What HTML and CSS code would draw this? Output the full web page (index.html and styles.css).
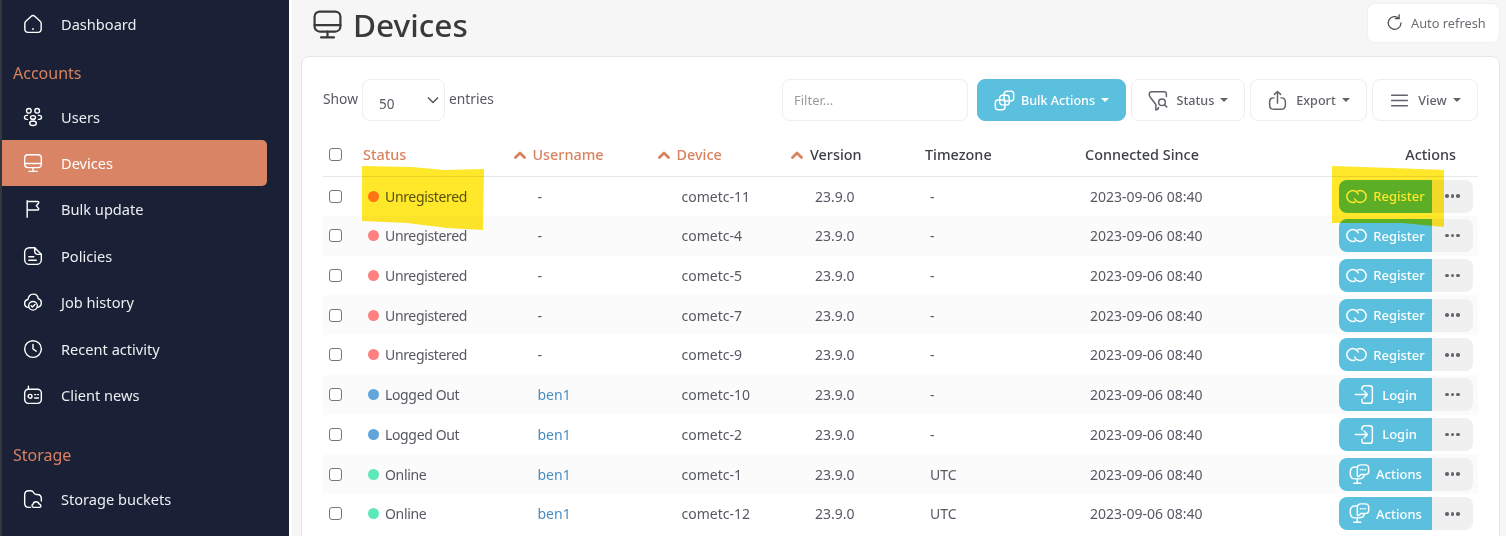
FILE: index.html
```html
<!DOCTYPE html>
<html>
<head>
    <title>Devices</title>
    <link rel="stylesheet" href="styles.css">
</head>
<body>
    <svg class="icon-defs" width="0" height="0">
        <symbol id="i-home" viewBox="0 0 24 24"><path d="M3.400 8.600 9.600 3a3.600 3.600 0 0 1 4.800 0l6.200 5.600a3.400 3.400 0 0 1 1.200 2.600V18a4 4 0 0 1-4 4H6.200a4 4 0 0 1-4-4v-6.800a3.400 3.400 0 0 1 1.200-2.600z"/><path d="M12 17.500v1"/></symbol>
        <symbol id="i-users" viewBox="0 0 24 24"><circle cx="7" cy="4.500" r="2.800"/><circle cx="17" cy="4.500" r="2.800"/><ellipse cx="12" cy="12.500" rx="3" ry="2.200"/><path d="M5.500 10H4.200a2.300 2.300 0 0 0 0 4.800h1.300M18.500 10h1.300a2.300 2.300 0 0 1 0 4.800h-1.300"/><ellipse cx="12" cy="19.500" rx="4" ry="2.700"/></symbol>
        <symbol id="i-monitor" viewBox="0 0 24 24"><rect x="2" y="2" width="20" height="15.500" rx="4"/><path d="M2 12.500h20M12 17.500V22M7 22h10"/></symbol>
        <symbol id="i-flag" viewBox="0 0 24 24"><path d="M5 2v20M5 3h12.500c1.300 0 1.800 1 1.100 2L16 8l2.600 3.200c.7 1 .2 2-1.100 2H5"/></symbol>
        <symbol id="i-policy" viewBox="0 0 24 24"><path d="M22 10v6.500a5.500 5.500 0 0 1-5.500 5.500h-9A5.500 5.500 0 0 1 2 16.500v-9A5.500 5.500 0 0 1 7.500 2H14"/><path d="M22 10h-4c-3 0-4-1-4-4V2z"/><path d="M7 13h6M7 17h9"/></symbol>
        <symbol id="i-cloud" viewBox="0 0 24 24"><path d="M6.500 18.500C3.800 18.300 2 16.200 2 13.700c0-2.400 1.700-4.300 4-4.700C6.500 5 9 2.500 12.300 2.500c3.200 0 5.600 2.300 6 5.400 2.200.6 3.700 2.700 3.700 5 0 2.600-1.700 4.800-4.200 5.500"/><circle cx="12" cy="16.500" r="5.200"/><path d="m9.800 16.600 1.500 1.400 3-2.900"/></symbol>
        <symbol id="i-clock" viewBox="0 0 24 24"><circle cx="12" cy="12" r="10"/><path d="M12 6.500V12l3.800 2.600"/></symbol>
        <symbol id="i-news" viewBox="0 0 24 24"><rect x="2" y="5" width="20" height="17" rx="4.500"/><path d="M6.500 5V1.500M14 11.500h1.300M17.500 11.500h1M14 15.500h4.500"/><circle cx="8.500" cy="13.500" r="2.300"/></symbol>
        <symbol id="i-folder" viewBox="0 0 24 24"><path d="M9 22H7c-3.500 0-5-1.500-5-5V7c0-3.500 1.500-5 5-5h2c2.500 0 2.500.8 3.500 2l1.200 1.500c.6.8 1 1 2.300 1H17c3.500 0 5 1.500 5 5v3"/><path d="M13 22c-2.500 0-3-3.500-.7-4 .4-3.500 6-3.500 7 0 2.500.3 3 3.500.7 4z"/></symbol>
        <symbol id="i-refresh" viewBox="0 0 24 24"><path d="M20 12a8.500 8.500 0 1 1-2.800-6.400"/><path d="M17.500 1v5H12.500"/></symbol>
        <symbol id="i-copy" viewBox="0 0 24 24"><rect x="11.500" y="1.500" width="11" height="11" rx="3"/><rect x="6.500" y="6" width="11" height="11" rx="3"/><rect x="1.500" y="11.500" width="11" height="11" rx="3"/></symbol>
        <symbol id="i-filter" viewBox="0 0 24 24"><path d="M9 22.500v-6L2.800 8.500C1.800 7.200 1.500 6.300 1.500 5V4.500C1.500 3 2.500 2 4 2h14.500C20 2 21 3 21 4.500v3"/><path d="M9 22.500c1.500 0 3-.8 3-2.500"/><circle cx="16" cy="14" r="3.800"/><path d="m19 17 2.500 2.500"/></symbol>
        <symbol id="i-export" viewBox="0 0 24 24"><path d="M8 9H7.500C4.500 9 3 11 3 14v3c0 3.500 2 5 5 5h8c3 0 5-1.500 5-5v-3c0-3-1.500-5-4.500-5H16"/><path d="M12 15V2M8.500 5 12 1.800 15.500 5"/></symbol>
        <symbol id="i-lines" viewBox="0 0 24 24"><path d="M3 6h18M3 12h18M3 18h18"/></symbol>
        <symbol id="i-link" viewBox="0 0 24 24"><path d="M10.500 18.240A6.800 6.800 0 1 1 14 9.200"/><path d="M13.500 5.760A6.800 6.800 0 1 1 10 14.800"/></symbol>
        <symbol id="i-login" viewBox="0 0 24 24"><path d="M9 6.500V5a3 3 0 0 1 3-3h6a3 3 0 0 1 3 3v14a3 3 0 0 1-3 3h-6a3 3 0 0 1-3-3v-1.500"/><path d="M1.500 12H15M11.500 8l3.800 4-3.800 4"/></symbol>
        <symbol id="i-actions" viewBox="0 0 24 24"><path d="M8.500 3.500H7C3.500 3.500 1.500 5.500 1.500 9v2c0 3.500 2 6 5.500 6h4.500c3.500 0 5.500-1.500 6-4.500"/><path d="M9.500 17v4.500M5.500 22h8"/><path d="M9.500 10.500V5c0-2.500 1.500-4 4-4h5c2.500 0 4 1.500 4 4v3.500c0 2-1.500 3.500-4 3.500h-5l-2 2c-1 .8-2 .3-2-1z"/><path d="M13 6.500h.6M15.700 6.500h.6M18.400 6.500h.6"/></symbol>
        <symbol id="i-sort" viewBox="0 0 12 8"><path d="M1.500 6.500 6 2l4.500 4.500"/></symbol>
    </svg>

    <div class="sidebar">
        <a class="nav-item"><svg class="nav-icon"><use href="#i-home"/></svg>Dashboard</a>
        <div class="nav-heading">Accounts</div>
        <a class="nav-item"><svg class="nav-icon"><use href="#i-users"/></svg>Users</a>
        <a class="nav-item active"><svg class="nav-icon"><use href="#i-monitor"/></svg>Devices</a>
        <a class="nav-item"><svg class="nav-icon"><use href="#i-flag"/></svg>Bulk update</a>
        <a class="nav-item"><svg class="nav-icon"><use href="#i-policy"/></svg>Policies</a>
        <a class="nav-item"><svg class="nav-icon"><use href="#i-cloud"/></svg>Job history</a>
        <a class="nav-item"><svg class="nav-icon"><use href="#i-clock"/></svg>Recent activity</a>
        <a class="nav-item"><svg class="nav-icon"><use href="#i-news"/></svg>Client news</a>
        <div class="nav-heading storage">Storage</div>
        <a class="nav-item"><svg class="nav-icon"><use href="#i-folder"/></svg>Storage buckets</a>
    </div>

    <div class="main">
        <div class="page-header">
            <h1><svg class="title-icon"><use href="#i-monitor"/></svg>Devices</h1>
            <button class="refresh-button"><svg class="btn-icon"><use href="#i-refresh"/></svg>Auto refresh</button>
        </div>

        <div class="card">
            <div class="toolbar">
                <div class="entries">
                    <span>Show</span>
                    <div class="select"><span>50</span><svg class="chevron" viewBox="0 0 12 8"><path d="M1 1.500 6 6.500l5-5"/></svg></div>
                    <span>entries</span>
                </div>
                <div class="tools">
                    <input class="filter" placeholder="Filter...">
                    <button class="tool primary tool-bulk"><svg class="tool-icon"><use href="#i-copy"/></svg>Bulk Actions<i class="caret"></i></button>
                    <button class="tool tool-status"><svg class="tool-icon"><use href="#i-filter"/></svg>Status<i class="caret"></i></button>
                    <button class="tool tool-export"><svg class="tool-icon"><use href="#i-export"/></svg>Export<i class="caret"></i></button>
                    <button class="tool tool-view"><svg class="tool-icon"><use href="#i-lines"/></svg>View<i class="caret"></i></button>
                </div>
            </div>

            <table class="device-table">
                <colgroup>
                    <col class="col-check"><col class="col-status"><col class="col-user"><col class="col-device">
                    <col class="col-version"><col class="col-zone"><col class="col-since"><col class="col-actions">
                </colgroup>
                <thead>
                    <tr>
                        <th><input type="checkbox"></th>
                        <th class="sorted">Status</th>
                        <th class="sorted"><svg class="sort"><use href="#i-sort"/></svg>Username</th>
                        <th class="sorted"><svg class="sort"><use href="#i-sort"/></svg>Device</th>
                        <th><svg class="sort"><use href="#i-sort"/></svg>Version</th>
                        <th>Timezone</th>
                        <th>Connected Since</th>
                        <th class="actions-head">Actions</th>
                    </tr>
                </thead>
                <tbody>
                    <tr>
                        <td><input type="checkbox"></td>
                        <td class="status-cell"><i class="dot unregistered"></i>Unregistered</td>
                        <td>-</td><td>cometc-11</td><td>23.9.0</td><td>-</td><td>2023-09-06 08:40</td>
                        <td><div class="row-actions"><button class="action-main"><svg class="act-icon"><use href="#i-link"/></svg>Register</button><button class="action-more"><i></i><i></i><i></i></button></div></td>
                    </tr>
                    <tr>
                        <td><input type="checkbox"></td>
                        <td class="status-cell"><i class="dot unregistered"></i>Unregistered</td>
                        <td>-</td><td>cometc-4</td><td>23.9.0</td><td>-</td><td>2023-09-06 08:40</td>
                        <td><div class="row-actions"><button class="action-main"><svg class="act-icon"><use href="#i-link"/></svg>Register</button><button class="action-more"><i></i><i></i><i></i></button></div></td>
                    </tr>
                    <tr>
                        <td><input type="checkbox"></td>
                        <td class="status-cell"><i class="dot unregistered"></i>Unregistered</td>
                        <td>-</td><td>cometc-5</td><td>23.9.0</td><td>-</td><td>2023-09-06 08:40</td>
                        <td><div class="row-actions"><button class="action-main"><svg class="act-icon"><use href="#i-link"/></svg>Register</button><button class="action-more"><i></i><i></i><i></i></button></div></td>
                    </tr>
                    <tr>
                        <td><input type="checkbox"></td>
                        <td class="status-cell"><i class="dot unregistered"></i>Unregistered</td>
                        <td>-</td><td>cometc-7</td><td>23.9.0</td><td>-</td><td>2023-09-06 08:40</td>
                        <td><div class="row-actions"><button class="action-main"><svg class="act-icon"><use href="#i-link"/></svg>Register</button><button class="action-more"><i></i><i></i><i></i></button></div></td>
                    </tr>
                    <tr>
                        <td><input type="checkbox"></td>
                        <td class="status-cell"><i class="dot unregistered"></i>Unregistered</td>
                        <td>-</td><td>cometc-9</td><td>23.9.0</td><td>-</td><td>2023-09-06 08:40</td>
                        <td><div class="row-actions"><button class="action-main"><svg class="act-icon"><use href="#i-link"/></svg>Register</button><button class="action-more"><i></i><i></i><i></i></button></div></td>
                    </tr>
                    <tr>
                        <td><input type="checkbox"></td>
                        <td class="status-cell"><i class="dot logged-out"></i>Logged Out</td>
                        <td><a class="user-link">ben1</a></td><td>cometc-10</td><td>23.9.0</td><td>-</td><td>2023-09-06 08:40</td>
                        <td><div class="row-actions"><button class="action-main"><svg class="act-icon login"><use href="#i-login"/></svg>Login</button><button class="action-more"><i></i><i></i><i></i></button></div></td>
                    </tr>
                    <tr>
                        <td><input type="checkbox"></td>
                        <td class="status-cell"><i class="dot logged-out"></i>Logged Out</td>
                        <td><a class="user-link">ben1</a></td><td>cometc-2</td><td>23.9.0</td><td>-</td><td>2023-09-06 08:40</td>
                        <td><div class="row-actions"><button class="action-main"><svg class="act-icon login"><use href="#i-login"/></svg>Login</button><button class="action-more"><i></i><i></i><i></i></button></div></td>
                    </tr>
                    <tr>
                        <td><input type="checkbox"></td>
                        <td class="status-cell"><i class="dot online"></i>Online</td>
                        <td><a class="user-link">ben1</a></td><td>cometc-1</td><td>23.9.0</td><td>UTC</td><td>2023-09-06 08:40</td>
                        <td><div class="row-actions"><button class="action-main"><svg class="act-icon"><use href="#i-actions"/></svg>Actions</button><button class="action-more"><i></i><i></i><i></i></button></div></td>
                    </tr>
                    <tr>
                        <td><input type="checkbox"></td>
                        <td class="status-cell"><i class="dot online"></i>Online</td>
                        <td><a class="user-link">ben1</a></td><td>cometc-12</td><td>23.9.0</td><td>UTC</td><td>2023-09-06 08:40</td>
                        <td><div class="row-actions"><button class="action-main"><svg class="act-icon"><use href="#i-actions"/></svg>Actions</button><button class="action-more"><i></i><i></i><i></i></button></div></td>
                    </tr>
                </tbody>
            </table>
        </div>
    </div>

    <!-- marker strokes drawn over the screenshot -->
    <svg class="marker marker-status" viewBox="0 0 122 65"><path d="M0 1 50 2l32 3 40-1-1 61-36-2-40-5L0 56z"/></svg>
    <svg class="marker marker-register" viewBox="0 0 112 62"><path d="M0 1 60 3l52 2v57L70 58 0 58z"/></svg>
</body>
</html>
```

FILE: styles.css
```css
* {
    box-sizing: border-box;
}
html, body {
    height: 100%;
}
body {
    font-family: "Noto Sans", Arial, sans-serif;
    margin: 0;
    display: flex;
    overflow: hidden;
    background-color: #f6f6f6;
    color: #575962;
    font-size: 14px;
}
.icon-defs {
    position: absolute;
}
symbol {
    fill: none;
    stroke: currentColor;
    stroke-width: 1.7;
    stroke-linecap: round;
    stroke-linejoin: round;
}
button {
    font-family: inherit;
    cursor: pointer;
}

/* sidebar */
.sidebar {
    width: 292px;
    flex-shrink: 0;
    padding-top: 0.6px;
    background-color: #1a2035;
    border-left: 2px solid #33363f;
    border-right: 3px solid #fff;
}
.nav-item {
    display: flex;
    align-items: center;
    width: 265px;
    height: 46.4px;
    padding-left: 21px;
    color: #eceef2;
    font-size: 14.6px;
    border-radius: 0 5px 5px 0;
}
.nav-item.active {
    background-color: #d98565;
    color: #fff;
}
.nav-icon {
    width: 20px;
    height: 20px;
    margin-right: 18px;
    color: #fff;
}
.nav-heading {
    height: 46.4px;
    padding: 14px 0 0 11px;
    color: #d9825f;
    font-size: 16px;
    line-height: 24px;
}
.nav-heading.storage {
    height: 57.6px;
    padding-top: 25px;
}

/* page header */
.main {
    flex: 1;
    min-width: 0;
    padding: 3px 6px 0 9px;
}
.page-header {
    display: flex;
    justify-content: space-between;
    height: 53px;
}
.page-header h1 {
    display: flex;
    align-items: center;
    height: 42px;
    margin: 0;
    color: #3a3a3a;
    font-size: 31.6px;
    font-weight: 500;
}
.title-icon {
    width: 31px;
    height: 31px;
    margin: 0 10px 0 11px;
}
.refresh-button {
    display: flex;
    align-items: center;
    width: 133px;
    height: 40px;
    padding: 0 0 0 18px;
    background: white;
    border: 1px solid #f1f1f1;
    border-radius: 8px;
    color: #6b6e75;
    font-size: 12.8px;
}
.btn-icon {
    width: 18px;
    height: 18px;
    margin-right: 7px;
    color: #4d5058;
}

/* card */
.card {
    height: 520px;
    padding: 22px 21px 0 21px;
    background: white;
    border: 1px solid #e6e6e6;
    border-radius: 8px;
}
.toolbar {
    display: flex;
    justify-content: space-between;
    margin-bottom: 21px;
}
.entries {
    display: flex;
    align-items: center;
    gap: 4px;
    height: 42px;
    padding-bottom: 4px;
    font-size: 13.8px;
}
.select {
    display: flex;
    align-items: center;
    justify-content: space-between;
    width: 83px;
    height: 42px;
    padding: 7px 5px 0 16px;
    margin-top: 4px;
    border: 1px solid #eeeeee;
    border-radius: 8px;
    font-size: 13.5px;
}
.chevron {
    width: 12px;
    height: 8px;
    margin-top: -7px;
    fill: none;
    stroke: #555;
    stroke-width: 1.5;
}
.tools {
    display: flex;
    gap: 5px;
}
.filter {
    width: 186px;
    height: 42px;
    margin-right: 4px;
    padding: 0 11px;
    border: 1px solid #eeeeee;
    border-radius: 8px;
    font-family: inherit;
    font-size: 13px;
}
.filter::placeholder {
    color: #9a9a9a;
}
.tool {
    display: flex;
    align-items: center;
    justify-content: center;
    height: 42px;
    padding: 0;
    background: white;
    border: 1px solid #eeeeee;
    border-radius: 8px;
    color: #60636b;
    font-size: 12.6px;
    font-weight: 500;
}
.tool.primary {
    background-color: #5bc0de;
    border-color: #5bc0de;
    color: white;
}
.tool-bulk { width: 149px; }
.tool-status { width: 114px; }
.tool-export { width: 117px; }
.tool-view { width: 106px; }
.tool-icon {
    width: 21px;
    height: 21px;
    margin-right: 8px;
}
.tool.primary .tool-icon {
    margin-right: 6px;
}
.caret {
    width: 0;
    height: 0;
    margin-left: 6px;
    border-left: 4px solid transparent;
    border-right: 4px solid transparent;
    border-top: 4px solid currentColor;
}

/* table */
.device-table {
    width: 1155px;
    table-layout: fixed;
    border-collapse: collapse;
}
.col-check { width: 35px; }
.col-status { width: 169.5px; }
.col-user { width: 144px; }
.col-device { width: 133.5px; }
.col-version { width: 115px; }
.col-zone { width: 160px; }
.col-since { width: 125px; }
.col-actions { width: 273px; }
.device-table th {
    height: 34px;
    padding: 0 5px 8px 5px;
    text-align: left;
    color: #3d3f46;
    font-size: 14.4px;
    font-weight: 500;
    border-bottom: 1px solid #e8e8e8;
    white-space: nowrap;
}
.device-table th.sorted {
    color: #d9825f;
}
.device-table th.actions-head {
    padding-right: 22px;
    text-align: right;
}
.device-table td {
    height: 39.75px;
    padding: 0 10px;
    white-space: nowrap;
}
.device-table td.status-cell {
    letter-spacing: -0.35px;
}
.device-table tbody tr:nth-child(even) {
    background-color: #fbfbfb;
}
input[type="checkbox"] {
    appearance: none;
    display: block;
    width: 13px;
    height: 13px;
    margin: 0 0 0 6px;
    border: 1.5px solid #777;
    border-radius: 3px;
    background: white;
}
.device-table td:first-child, .device-table th:first-child {
    padding-left: 0;
    padding-right: 0;
}
.sort {
    width: 12px;
    height: 8px;
    margin: 0 7px 1px -19px;
    color: #d9825f;
}
#i-sort {
    stroke-width: 2.8;
}
.dot {
    display: inline-block;
    width: 11px;
    height: 11px;
    margin-right: 6px;
    border-radius: 50%;
}
.dot.unregistered { background-color: #ff8080; }
.dot.logged-out { background-color: #62a5dc; }
.dot.online { background-color: #5de8b8; }
.user-link {
    color: #4a8cc0;
}
.row-actions {
    display: flex;
    justify-content: flex-end;
    margin-right: -5px;
}
.action-main {
    display: flex;
    align-items: center;
    justify-content: center;
    width: 93px;
    height: 33px;
    padding: 0;
    background-color: #5bc0de;
    border: none;
    border-radius: 8px 0 0 8px;
    color: white;
    font-size: 13px;
    font-weight: 500;
}
.act-icon {
    width: 21px;
    height: 21px;
    margin-right: 6px;
}
.act-icon.login {
    margin-right: 7px;
}
.action-more {
    display: flex;
    align-items: center;
    justify-content: center;
    gap: 2px;
    width: 41px;
    height: 33px;
    padding: 0;
    background-color: #f0f0f0;
    border: none;
    border-radius: 0 8px 8px 0;
}
.action-more i {
    width: 3.5px;
    height: 3.5px;
    background-color: #62656d;
    border-radius: 50%;
}

/* highlighter marks */
.marker {
    position: absolute;
    mix-blend-mode: multiply;
    fill: #ffe72a;
}
.marker-status {
    left: 362px;
    top: 165px;
    width: 122px;
    height: 65px;
}
.marker-register {
    left: 1332px;
    top: 165px;
    width: 112px;
    height: 62px;
}
```
